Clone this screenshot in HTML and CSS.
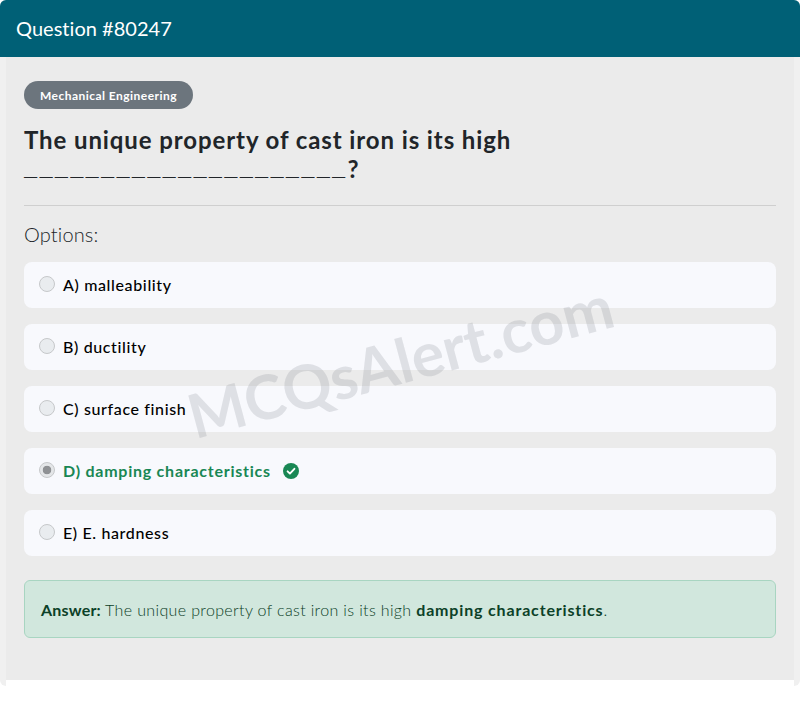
FILE: index.html
```html
<!DOCTYPE html>
<html lang="en">
<head>
<meta charset="utf-8">
<title>Question #80247</title>
<link rel="stylesheet" href="styles.css">
</head>
<body>
<div class="card">
  <header class="card-header">Question #80247</header>
  <main class="card-body">
    <span class="badge">Mechanical Engineering</span>
    <h1 class="question">The unique property of cast iron is its high <span class="blank">_____________________</span>?</h1>
    <hr class="rule">
    <h2 class="options-title">Options:</h2>
    <div class="options">
      <div class="option"><span class="radio"></span><span class="option-text">A) malleability</span></div>
      <div class="option"><span class="radio"></span><span class="option-text">B) ductility</span></div>
      <div class="option"><span class="radio"></span><span class="option-text">C) surface finish</span></div>
      <div class="option correct"><span class="radio checked"></span><span class="option-text">D) damping characteristics</span>
        <svg class="check" viewBox="0 0 16 16" width="16" height="16"><circle cx="8" cy="8" r="8" fill="#198754"/><path d="M4.6 8.3l2.3 2.3 4.5-4.8" fill="none" stroke="#fff" stroke-width="1.9" stroke-linecap="round" stroke-linejoin="round"/></svg>
      </div>
      <div class="option"><span class="radio"></span><span class="option-text">E) E. hardness</span></div>
    </div>
    <div class="answer"><b class="label">Answer:</b> The unique property of cast iron is its high <b class="key">damping characteristics</b>.</div>
  </main>
  <div class="watermark">MCQsAlert.com</div>
</div>
</body>
</html>
```
FILE: styles.css
```css
* { box-sizing: border-box; }
html, body { margin: 0; background: #fff; }
body { font-family: "Lato", "Noto Sans", sans-serif; height: 711px; overflow: hidden; }
.card { position: relative; width: 800px; height: 686px; background: #f0f0f0; border-radius: 6px; overflow: hidden; }
.card-header { height: 57px; background: #006076; color: #fff; font-size: 20px; line-height: 57px; padding-left: 16px; letter-spacing: .03px; }
.card-body { height: 623px; margin: 0 6px; background: #ebebeb; padding: 24px 18px 0; }
.card::after { content: ""; position: absolute; left: 6px; right: 6px; bottom: 0; height: 6px; background: #fff; }
.badge { display: inline-block; height: 28px; line-height: 30px; padding: 0 16px; border-radius: 14px; background: #6c757d; color: #fff; font-size: 12px; font-weight: 700; letter-spacing: .46px; }
.question { margin: 16px 0 0; font-size: 24px; line-height: 29px; font-weight: 700; color: #212529; width: 520px; letter-spacing: .9px; }
.blank { font-family: "Liberation Mono", monospace; font-size: 22px; letter-spacing: 2.2px; line-height: 0; position: relative; top: -2px; }
.rule { margin: 22px 0 0; border: 0; border-top: 1px solid #cfcfcf; }
.options-title { margin: 16px 0 0; font-size: 20px; line-height: 24px; font-weight: 300; color: #212529; letter-spacing: .15px; }
.options { margin-top: 16px; display: flex; flex-direction: column; gap: 16px; }
.option { height: 46px; background: #f8f9fd; border-radius: 8px; display: flex; align-items: center; padding: 0 15px; font-size: 16px; font-weight: 500; color: #000; letter-spacing: .63px; }
.option-text { margin-bottom: 2px; }
.radio { width: 16px; height: 16px; border-radius: 50%; background: #e9ecef; border: 1px solid #c6c8ca; margin-right: 8px; position: relative; top: -1px; }
.radio.checked { background: radial-gradient(circle, #8f9194 0 4px, #e4e6e8 4.6px); }
.correct { color: #198754; font-weight: 700; letter-spacing: .76px; }
.check { margin-left: 12px; margin-bottom: 1px; }
.answer { margin-top: 24px; height: 58px; padding: 0 16px; line-height: 57px; background: #d1e7dd; border: 1px solid #a8d5c1; border-radius: 6px; color: #0a3d26; font-size: 16px; font-weight: 300; letter-spacing: .36px; }
.answer b { color: #0c4128; font-weight: 700; }
.label { letter-spacing: .2px; }
.key { letter-spacing: .84px; }
.watermark { position: absolute; left: 400px; top: 360px; transform: translate(-50%, -50%) rotate(-15deg); font-size: 61px; font-weight: 700; color: rgba(130, 135, 145, .22); white-space: nowrap; pointer-events: none; }
```
